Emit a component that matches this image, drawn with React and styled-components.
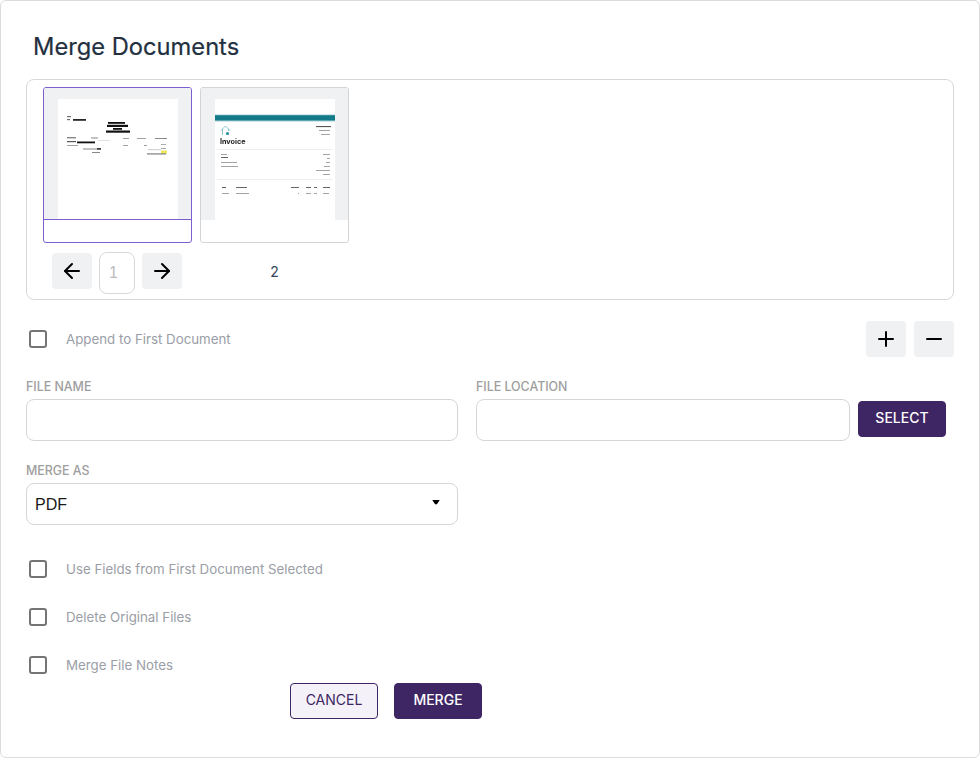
import React from 'react';
import styled, { createGlobalStyle } from 'styled-components';
import { ArrowLeft, ArrowRight, Plus, Minus } from 'lucide-react';

const Global = createGlobalStyle`
  html, body { margin: 0; padding: 0; background: #fff; }
  * { box-sizing: border-box; }
  body { font-family: Inter, "Liberation Sans", sans-serif; }
`;

const Modal = styled.div`
  width: 980px; height: 758px; background: #fff;
  border: 1px solid #dcdcdc; border-radius: 6px;
  padding: 0 25px; overflow: hidden;
`;
const Title = styled.h1`
  margin: 0; padding: 31px 0 0 7px; height: 78px;
  font-size: 23.7px; line-height: 30px; font-weight: 400; color: #22303f;
  -webkit-text-stroke: 0.2px #22303f;
`;
const Panel = styled.div`
  height: 221px; border: 1px solid #d8d8d8; border-radius: 8px;
  padding: 7px 16px; display: flex; gap: 8px; align-items: flex-start;
`;
const ThumbColumn = styled.div`
  width: 149px; display: flex; flex-direction: column;
`;
const ThumbCard = styled.div`
  height: 156px; border: 1px solid ${p => (p.$active ? '#7b5fd0' : '#d4d4d4')};
  border-radius: 3px; background: #fff; overflow: hidden;
`;
const Preview = styled.div`
  height: 132px; background: #f0f1f3; padding: 11px 14px 0;
  border-bottom: 1px solid ${p => (p.$active ? '#7b5fd0' : 'transparent')};
`;
const Page = styled.div`
  width: 120px; height: ${p => (p.$active ? 120 : 121)}px; background: #fff; position: relative; overflow: hidden;
`;
const PageArt = styled.svg`
  display: block; width: 120px; height: 120px; filter: blur(0.45px);
`;
const InvoiceWord = styled.span`
  position: absolute; left: 5px; top: 38px;
  font-size: 7.2px; line-height: 9px; font-weight: 700; color: #1a1a1a;
  filter: blur(0.25px);
`;
const Pager = styled.div`
  display: flex; gap: 7px; padding: 10px 0 0 9px; align-items: flex-start;
`;
const IconButton = styled.button`
  width: 40px; height: 36px; border: 0; border-radius: 4px; background: #f0f1f3;
  padding: 0; display: flex; align-items: center; justify-content: center; color: #000;
`;
const PagerInput = styled.div`
  width: 36px; height: 42px; margin-top: -1px; border: 1px solid #d8d8d8; border-radius: 8px;
  display: flex; align-items: center; padding-left: 9px;
  font: 16px "Liberation Sans", sans-serif; color: #bcbcbc;
`;
const PageNumber = styled.div`
  height: 46px; padding-top: 21px; text-align: center;
  font-size: 14px; line-height: 16px; color: #34455a;
`;
const TopRow = styled.div`
  height: 57px; padding-top: 21px; display: flex; justify-content: space-between; align-items: flex-start;
`;
const CheckRow = styled.label`
  display: flex; align-items: center; gap: 19px; padding-left: 3px;
  height: ${p => p.$h || 48}px;
  font-size: 13.3px; color: #9a9ea6;
`;
const Box = styled.span`
  width: 18px; height: 18px; border: 2px solid #757575; border-radius: 3px; flex: none;
`;
const Tools = styled.div`
  display: flex; gap: 8px;
`;
const FieldRow = styled.div`
  display: flex; gap: 18px; margin-top: 21px;
`;
const Field = styled.div`
  width: ${p => p.$w}px; flex: none;
`;
const Label = styled.div`
  height: 21px; padding-top: 1px; font-size: 12.4px; line-height: 16px; font-weight: 500; color: #9e9e9e;
`;
const Input = styled.div`
  height: 42px; border: 1px solid #d6d6d6; border-radius: 8px; background: #fff;
`;
const InputWithButton = styled.div`
  display: flex; gap: 8px; align-items: flex-start;
`;
const FlexInput = styled(Input)`
  width: 374px; flex: none;
`;
const Btn = styled.button`
  width: 88px; height: 36px; border-radius: 4px; padding: 0 0 2px;
  font: 500 14px/1 Inter, "Liberation Sans", sans-serif;
  border: 1px solid #3e2563;
  background: ${p => (p.$outline ? '#f4f1f8' : '#3e2563')};
  color: ${p => (p.$outline ? '#3e2563' : '#fff')};
  font-weight: ${p => (p.$outline ? 400 : 500)};
`;
const SelectButton = styled(Btn)`
  margin-top: 2px;
`;
const SelectBox = styled(Input)`
  display: flex; align-items: center; justify-content: space-between;
  padding: 2px 17px 0 8px; font: 16px "Liberation Sans", sans-serif; color: #1a1a1a;
`;
const Caret = styled.svg`
  width: 8px; height: 5px; display: block; margin-top: -5px;
`;
const Checks = styled.div`
  margin-top: 20px;
`;
const Footer = styled.div`
  display: flex; gap: 16px; padding-left: 264px; margin-top: -6px;
`;

function Check({ children, h }) {
  return <CheckRow $h={h}><Box /><span>{children}</span></CheckRow>;
}

function ScanArt() {
  return (
    <PageArt viewBox="0 0 120 120">
      <g fill="#111">
        <rect x="9" y="17" width="4" height="1.2" opacity=".6" />
        <rect x="9" y="20" width="3" height="1.2" opacity=".6" />
        <rect x="15" y="20" width="13" height="1.8" opacity=".9" />
        <rect x="50" y="23" width="17" height="1.8" />
        <rect x="49" y="25.8" width="21" height="2.2" />
        <rect x="55" y="29" width="9" height="1.8" />
        <rect x="48" y="31.5" width="24" height="2.2" />
        <rect x="9" y="38" width="9" height="1.4" opacity=".5" />
        <rect x="9" y="42" width="9" height="1.2" opacity=".7" />
        <rect x="19" y="42.5" width="18" height="1.8" />
        <rect x="9" y="46" width="11" height="1" opacity=".4" />
        <rect x="33" y="38.5" width="7" height="1" opacity=".5" />
        <rect x="40" y="41" width="12" height=".6" opacity=".2" />
        <rect x="65" y="39" width="6" height="1" opacity=".4" />
        <rect x="79" y="39" width="9" height="1" opacity=".4" />
        <rect x="97" y="39" width="12" height="1" opacity=".5" />
        <rect x="65" y="46" width="5" height="1" opacity=".4" />
        <rect x="86" y="46" width="3" height="1" opacity=".4" />
        <rect x="103" y="45" width="5" height="1" opacity=".35" />
        <rect x="25" y="49.5" width="14" height="1" opacity=".5" />
        <rect x="39" y="49" width="4" height="1.8" opacity=".8" />
        <rect x="34" y="53" width="8" height="1" opacity=".5" />
        <rect x="103" y="49" width="5" height="1" opacity=".35" />
      </g>
      <rect x="103" y="51.5" width="6" height="3" fill="#ece75c" />
      <rect x="90" y="50.5" width="13" height=".6" fill="#aaa" />
      <rect x="89" y="54.5" width="19" height=".9" fill="#555" />
    </PageArt>
  );
}

function InvoiceArt() {
  return (
    <>
      <PageArt viewBox="0 0 120 120">
        <rect x="0" y="15" width="120" height="8" fill="#d3e7ea" />
        <rect x="0" y="16.2" width="120" height="5.4" fill="#137a8a" />
        <path d="M6 31.5 L10.5 27 L15 31.5 M7.5 30 V36 M13.5 30 V32" fill="none" stroke="#7dbccb" strokeWidth=".9" />
        <circle cx="12.5" cy="34.5" r="1.6" fill="#2a8ca0" />
        <g fill="#555">
          <rect x="101" y="27" width="15" height="1.1" />
          <rect x="104" y="31" width="11" height=".9" opacity=".6" />
          <rect x="106" y="35" width="9" height=".9" opacity=".6" />
          <rect x="6" y="55" width="6" height=".9" opacity=".6" />
          <rect x="6" y="58" width="7" height=".9" />
          <rect x="6" y="63" width="16" height=".9" opacity=".6" />
          <rect x="6" y="67" width="17" height=".9" opacity=".6" />
          <rect x="108" y="55" width="7" height=".9" opacity=".6" />
          <rect x="112" y="59" width="3" height=".9" opacity=".6" />
          <rect x="111" y="63" width="4" height=".9" opacity=".6" />
          <rect x="109" y="67" width="6" height=".9" opacity=".6" />
          <rect x="101" y="71" width="14" height=".9" opacity=".6" />
          <rect x="108" y="75" width="7" height=".9" opacity=".6" />
          <rect x="7" y="88" width="4" height=".9" />
          <rect x="21" y="88" width="11" height=".9" />
          <rect x="76" y="88" width="8" height=".9" />
          <rect x="91" y="88" width="5" height=".9" />
          <rect x="99" y="88" width="3" height=".9" />
          <rect x="108" y="88" width="7" height=".9" />
          <rect x="7" y="94" width="7" height=".9" opacity=".6" />
          <rect x="21" y="94" width="13" height=".9" opacity=".6" />
          <rect x="83" y="94" width="1" height=".9" opacity=".6" />
          <rect x="91" y="94" width="5" height=".9" opacity=".6" />
          <rect x="99" y="94" width="3" height=".9" opacity=".6" />
          <rect x="108" y="94" width="6" height=".9" opacity=".6" />
        </g>
        <rect x="2" y="50" width="116" height="1" fill="#eee" />
        <rect x="2" y="80" width="116" height="1" fill="#eee" />
      </PageArt>
      <InvoiceWord>Invoice</InvoiceWord>
    </>
  );
}

export default function App() {
  return (
    <>
      <Global />
      <Modal>
        <Title>Merge Documents</Title>
        <Panel>
          <ThumbColumn>
            <ThumbCard $active>
              <Preview $active><Page $active><ScanArt /></Page></Preview>
            </ThumbCard>
            <Pager>
              <IconButton><ArrowLeft size={24} strokeWidth={2} /></IconButton>
              <PagerInput>1</PagerInput>
              <IconButton><ArrowRight size={24} strokeWidth={2} /></IconButton>
            </Pager>
          </ThumbColumn>
          <ThumbColumn>
            <ThumbCard>
              <Preview><Page><InvoiceArt /></Page></Preview>
            </ThumbCard>
            <PageNumber>2</PageNumber>
          </ThumbColumn>
        </Panel>
        <TopRow>
          <Check h={36}>Append to First Document</Check>
          <Tools>
            <IconButton><Plus size={24} strokeWidth={2} /></IconButton>
            <IconButton><Minus size={24} strokeWidth={2} /></IconButton>
          </Tools>
        </TopRow>
        <FieldRow>
          <Field $w={432}>
            <Label>FILE NAME</Label>
            <Input />
          </Field>
          <Field $w={470}>
            <Label>FILE LOCATION</Label>
            <InputWithButton>
              <FlexInput />
              <SelectButton>SELECT</SelectButton>
            </InputWithButton>
          </Field>
        </FieldRow>
        <FieldRow>
          <Field $w={432}>
            <Label>MERGE AS</Label>
            <SelectBox>
              PDF
              <Caret viewBox="0 0 9 6"><path d="M0 0 H9 L6 4.5 Q4.5 6 3 4.5 Z" fill="#000" /></Caret>
            </SelectBox>
          </Field>
        </FieldRow>
        <Checks>
          <Check>Use Fields from First Document Selected</Check>
          <Check>Delete Original Files</Check>
          <Check>Merge File Notes</Check>
        </Checks>
        <Footer>
          <Btn $outline>CANCEL</Btn>
          <Btn>MERGE</Btn>
        </Footer>
      </Modal>
    </>
  );
}
